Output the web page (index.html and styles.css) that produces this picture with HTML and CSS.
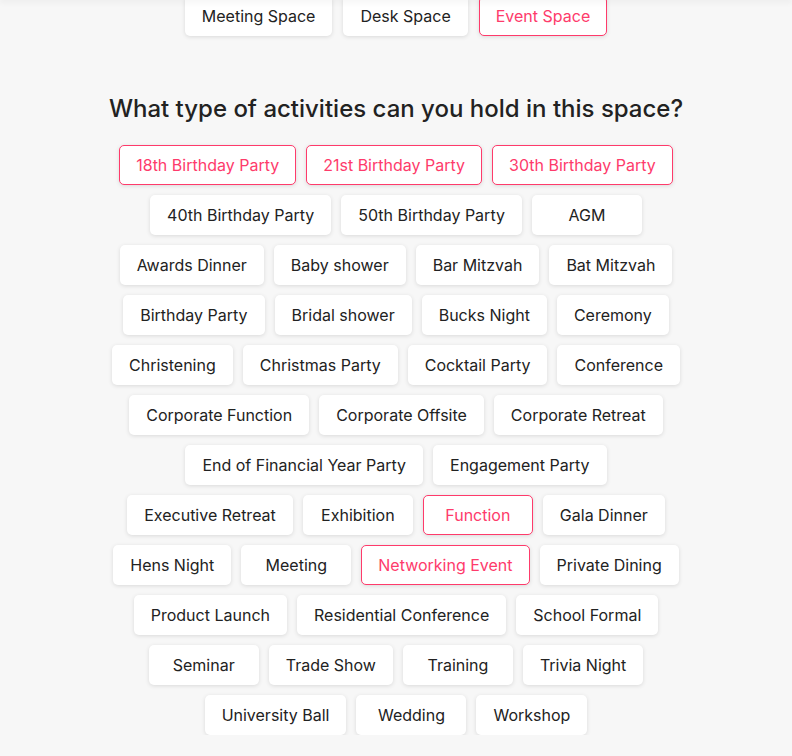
FILE: index.html
```html
<!DOCTYPE html>
<html>
<head>
<meta charset="utf-8">
<link rel="stylesheet" href="styles.css">
</head>
<body>
<div class="topshade"></div>
<div class="page">
  <div class="types">
    <button class="chip">Meeting Space</button>
    <button class="chip">Desk Space</button>
    <button class="chip on">Event Space</button>
  </div>
  <h2 class="title">What type of activities can you hold in this space?</h2>
  <div class="activities">
    <button class="chip on">18th Birthday Party</button>
    <button class="chip on">21st Birthday Party</button>
    <button class="chip on">30th Birthday Party</button>
    <button class="chip">40th Birthday Party</button>
    <button class="chip">50th Birthday Party</button>
    <button class="chip">AGM</button>
    <button class="chip">Awards Dinner</button>
    <button class="chip">Baby shower</button>
    <button class="chip">Bar Mitzvah</button>
    <button class="chip">Bat Mitzvah</button>
    <button class="chip">Birthday Party</button>
    <button class="chip">Bridal shower</button>
    <button class="chip">Bucks Night</button>
    <button class="chip">Ceremony</button>
    <button class="chip">Christening</button>
    <button class="chip">Christmas Party</button>
    <button class="chip">Cocktail Party</button>
    <button class="chip">Conference</button>
    <button class="chip">Corporate Function</button>
    <button class="chip">Corporate Offsite</button>
    <button class="chip">Corporate Retreat</button>
    <button class="chip">End of Financial Year Party</button>
    <button class="chip">Engagement Party</button>
    <button class="chip">Executive Retreat</button>
    <button class="chip">Exhibition</button>
    <button class="chip on">Function</button>
    <button class="chip">Gala Dinner</button>
    <button class="chip">Hens Night</button>
    <button class="chip">Meeting</button>
    <button class="chip on">Networking Event</button>
    <button class="chip">Private Dining</button>
    <button class="chip">Product Launch</button>
    <button class="chip">Residential Conference</button>
    <button class="chip">School Formal</button>
    <button class="chip">Seminar</button>
    <button class="chip">Trade Show</button>
    <button class="chip">Training</button>
    <button class="chip">Trivia Night</button>
    <button class="chip">University Ball</button>
    <button class="chip">Wedding</button>
    <button class="chip">Workshop</button>
  </div>
</div>
</body>
</html>
```
FILE: styles.css
```css
html, body {
  margin: 0;
  padding: 0;
  background: #f7f7f7;
  font-family: Inter, "Noto Sans", sans-serif;
  color: #222;
}
.topshade {
  position: fixed;
  top: 0;
  left: 0;
  right: 0;
  height: 0;
  box-shadow: 0 0 6px 1px rgba(0,0,0,0.12);
}
.page {
  width: 580px;
  margin: -4px auto 0;
  display: flex;
  flex-direction: column;
  align-items: center;
}
.types {
  display: flex;
  gap: 11px;
  justify-content: center;
}
.title {
  margin: 57px 0 0;
  font-size: 24px;
  font-weight: 500;
  line-height: 32px;
  color: #222;
  text-align: center;
}
.activities {
  margin-top: 20px;
  display: flex;
  flex-wrap: wrap;
  justify-content: center;
  gap: 10px 10px;
}
.chip {
  box-sizing: border-box;
  height: 40px;
  min-width: 110px;
  padding: 0 16px;
  border: 1px solid transparent;
  border-radius: 5px;
  background: #fff;
  color: #222;
  font-family: Inter, "Noto Sans", sans-serif;
  font-size: 16px;
  box-shadow: 0 1px 4px rgba(0,0,0,0.12);
  cursor: pointer;
}
.chip.on {
  border-color: #fe3b6b;
  color: #fe3b6b;
}
```
